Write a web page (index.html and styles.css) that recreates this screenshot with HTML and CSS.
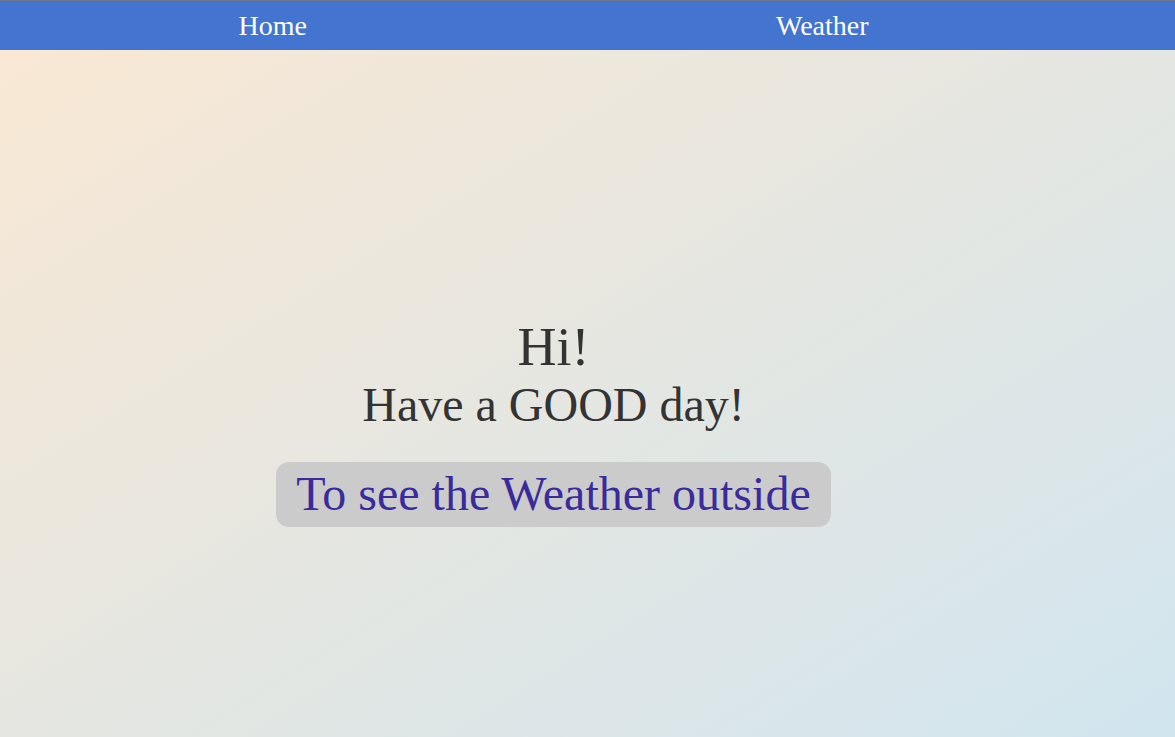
FILE: index.html
```html
<!DOCTYPE html>
<html lang="en">
<head>
<meta charset="utf-8">
<title>Home</title>
<link rel="stylesheet" href="styles.css">
</head>
<body>
<nav class="nav">
  <ul class="nav-list">
    <li class="nav-item"><a class="nav-link" href="#">Home</a></li>
    <li class="nav-item"><a class="nav-link" href="#">Weather</a></li>
  </ul>
</nav>
<main class="main">
  <h1 class="hi">Hi!</h1>
  <p class="wish">Have a GOOD day!</p>
  <a class="weather-btn" href="#">To see the Weather outside</a>
</main>
</body>
</html>
```

FILE: styles.css
```css
html {
  height: 100%;
}

body {
  margin: 0;
  min-height: 100%;
  font-family: "Liberation Serif", "Times New Roman", serif;
  background: linear-gradient(to bottom right, #fae8d3, #d1e5ef);
  color: #333333;
}

.nav {
  background: #4374d0;
  border-top: 1px solid #6b7890;
  padding: 10px 0 9px;
}

.nav-list {
  list-style: none;
  margin: 0 0 0 -2px;
  padding: 0;
  width: 1099px;
  display: grid;
  grid-template-columns: 1fr 1fr;
}

.nav-item {
  text-align: center;
  font-size: 28px;
  line-height: 30px;
}

.nav-link {
  color: #ffffff;
  text-decoration: none;
}

.main {
  width: 1107px;
  padding-top: 267px;
  display: flex;
  flex-direction: column;
  align-items: center;
  text-align: center;
}

.hi {
  margin: 0;
  font-size: 54px;
  font-weight: normal;
  line-height: 61px;
}

.wish {
  margin: 0;
  font-size: 48px;
  line-height: 53px;
}

.weather-btn {
  margin-top: 31px;
  display: inline-block;
  padding: 5px 20px 7px;
  font-size: 48px;
  line-height: 53px;
  color: #3a2b9c;
  background: #cbcbcb;
  border-radius: 13px;
  text-decoration: none;
}
```
